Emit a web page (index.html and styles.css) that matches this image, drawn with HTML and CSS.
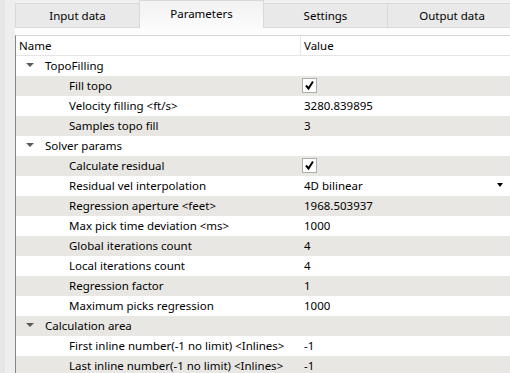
FILE: index.html
```html
<!DOCTYPE html>
<html>
  <head>
    <meta charset="utf-8" />
    <title>Parameters</title>
    <link rel="stylesheet" href="styles.css">
  </head>
  <body>
    <div class="window">
      <div class="side"></div>

      <div class="tabwidget">
        <div class="tabbar">
          <div class="tab tab-first">Input data</div>
          <div class="tab tab-active">Parameters</div>
          <div class="tab">Settings</div>
          <div class="tab tab-last">Output data</div>
        </div>

        <div class="pane">
          <div class="tree">
            <div class="row header">
              <div class="cell name">Name</div>
              <div class="cell value">Value</div>
            </div>

            <div class="row">
              <div class="cell name group"><span class="arrow"></span>TopoFilling</div>
              <div class="cell value"></div>
            </div>
            <div class="row alt">
              <div class="cell name child">Fill topo</div>
              <div class="cell value">
                <span class="check"><svg width="11" height="11" viewBox="0 0 11 11"><path d="M2 5.5 L4.5 8.5 L9 1.5" fill="none" stroke="#000" stroke-width="2"/></svg></span>
              </div>
            </div>
            <div class="row">
              <div class="cell name child">Velocity filling &lt;ft/s&gt;</div>
              <div class="cell value">3280.839895</div>
            </div>
            <div class="row alt">
              <div class="cell name child">Samples topo fill</div>
              <div class="cell value">3</div>
            </div>

            <div class="row">
              <div class="cell name group"><span class="arrow"></span>Solver params</div>
              <div class="cell value"></div>
            </div>
            <div class="row alt">
              <div class="cell name child">Calculate residual</div>
              <div class="cell value">
                <span class="check"><svg width="11" height="11" viewBox="0 0 11 11"><path d="M2 5.5 L4.5 8.5 L9 1.5" fill="none" stroke="#000" stroke-width="2"/></svg></span>
              </div>
            </div>
            <div class="row">
              <div class="cell name child">Residual vel interpolation</div>
              <div class="cell value combo">4D bilinear<span class="drop"></span></div>
            </div>
            <div class="row alt">
              <div class="cell name child">Regression aperture &lt;feet&gt;</div>
              <div class="cell value">1968.503937</div>
            </div>
            <div class="row">
              <div class="cell name child">Max pick time deviation &lt;ms&gt;</div>
              <div class="cell value">1000</div>
            </div>
            <div class="row alt">
              <div class="cell name child">Global iterations count</div>
              <div class="cell value">4</div>
            </div>
            <div class="row">
              <div class="cell name child">Local iterations count</div>
              <div class="cell value">4</div>
            </div>
            <div class="row alt">
              <div class="cell name child">Regression factor</div>
              <div class="cell value">1</div>
            </div>
            <div class="row">
              <div class="cell name child">Maximum picks regression</div>
              <div class="cell value">1000</div>
            </div>

            <div class="row alt">
              <div class="cell name group"><span class="arrow"></span>Calculation area</div>
              <div class="cell value"></div>
            </div>
            <div class="row">
              <div class="cell name child">First inline number(-1 no limit) &lt;Inlines&gt;</div>
              <div class="cell value">-1</div>
            </div>
            <div class="row alt">
              <div class="cell name child">Last inline number(-1 no limit) &lt;Inlines&gt;</div>
              <div class="cell value">-1</div>
            </div>
          </div>
        </div>
      </div>
    </div>
  </body>
</html>
```

FILE: styles.css
```css
body {
  margin: 0;
  background: #f0f0f0;
  font-family: "Noto Sans", "Open Sans", sans-serif;
  font-size: 11.5px;
  color: #000;
  overflow: hidden;
}

.window {
  display: flex;
  height: 373px;
}

/* splitter strip on the left */
.side {
  width: 10px;
  flex: none;
  border-left: 5px solid #e6e6e6;
  background: #eeeeee;
}

.tabwidget {
  flex: 1;
  min-width: 0;
  display: flex;
  flex-direction: column;
}

/**
 * Tabs
 */
.tabbar {
  display: flex;
  align-items: flex-end;
  height: 28px;
  flex: none;
}

.tab {
  box-sizing: border-box;
  width: 125px;
  height: 25px;
  flex: none;
  display: flex;
  align-items: center;
  justify-content: center;
  padding-bottom: 1px;
  background: #e9e9e9;
  border: 1px solid #d9d9d9;
  margin-right: -1px;
}

.tab-active {
  height: 28px;
  background: linear-gradient(#f2f2f2, #fbfbfb);
  border-bottom: none;
  padding-bottom: 2px;
  position: relative;
  z-index: 1;
}

.tab-last {
  width: 130px;
}

.pane {
  flex: 1;
  background: #fcfcfc;
  padding-top: 7px;
}

/**
 * Property tree
 */
.tree {
  background: #fff;
  border-left: 1px solid #828790;
  border-top: 1px solid #d4d4d4;
  height: 100%;
}

.row {
  box-sizing: border-box;
  display: grid;
  grid-template-columns: 284px 1fr;
  height: 20px;
  padding-bottom: 2px;
  align-items: center;
}

.row.alt {
  background: #e9e7e3;
}

.header {
  height: 20px;
  padding-bottom: 1px;
  border-bottom: 1px solid #e5e5e5;
}

.header .value {
  border-left: 1px solid #e5e5e5;
  padding-left: 3px;
  height: 19px;
  display: flex;
  align-items: center;
}

.cell {
  white-space: nowrap;
  overflow: hidden;
}

.name {
  padding-left: 3px;
}

.value {
  padding-left: 4px;
}

.group {
  padding-left: 10px;
  display: flex;
  align-items: center;
}

.child {
  padding-left: 53px;
}

.arrow {
  width: 0;
  height: 0;
  border-left: 4px solid transparent;
  border-right: 4px solid transparent;
  border-top: 4px solid #5a5a5a;
  margin-right: 11px;
}

.check {
  box-sizing: border-box;
  display: flex;
  align-items: center;
  justify-content: center;
  width: 15px;
  height: 15px;
  margin-left: -2px;
  border: 1px solid #adadad;
  background: #fff;
}

.combo {
  display: flex;
  align-items: center;
}

.drop {
  margin-left: auto;
  margin-right: 7px;
  width: 0;
  height: 0;
  border-left: 3px solid transparent;
  border-right: 3px solid transparent;
  border-top: 4px solid #000;
}
```
